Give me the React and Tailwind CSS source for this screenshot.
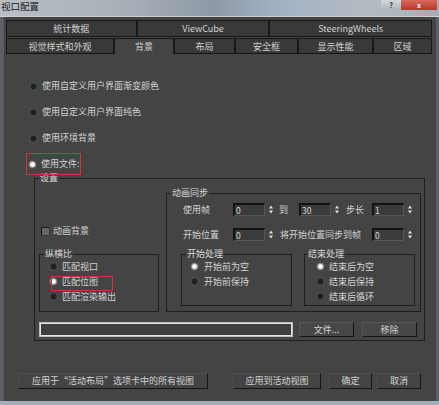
import React from "react";

const Radio = ({ on }) =>
  on ? (
    <svg width="9" height="9" viewBox="0 0 9 9" className="shrink-0">
      <defs>
        <radialGradient id="rs" cx="50%" cy="50%" r="50%">
          <stop offset="0" stopColor="#ffffff" />
          <stop offset="0.45" stopColor="#f2f2f2" />
          <stop offset="0.7" stopColor="#8c8c8c" />
          <stop offset="1" stopColor="#4e4e4e" />
        </radialGradient>
      </defs>
      <circle cx="4.5" cy="4.5" r="4.3" fill="url(#rs)" />
    </svg>
  ) : (
    <svg width="9" height="9" viewBox="0 0 9 9" className="shrink-0">
      <defs>
        <radialGradient id="ru" cx="50%" cy="50%" r="50%">
          <stop offset="0" stopColor="#1a1a1a" />
          <stop offset="0.6" stopColor="#262626" />
          <stop offset="1" stopColor="#5a5a5a" />
        </radialGradient>
      </defs>
      <circle cx="4.5" cy="4.5" r="4.3" fill="url(#ru)" />
    </svg>
  );

const Spin = ({ v }) => (
  <div className="flex items-center w-[41px] shrink-0">
    <div className="w-[32px] h-[13px] bg-[#3b3b3b] border-t-2 border-l-2 border-t-[#121212] border-l-[#121212] border-b border-r border-b-[#565656] border-r-[#565656] text-[8.5px] leading-[10px] pl-[1px] text-[#d4d4d4]">
      {v}
    </div>
    <svg className="ml-[3px]" width="6" height="11" viewBox="0 0 6 11">
      <polygon points="1,4.5 3,1.5 5,4.5" fill="#e2e2e2" />
      <polygon points="1,6.5 3,9.5 5,6.5" fill="#e2e2e2" />
    </svg>
  </div>
);

const Legend = ({ children, ml = "ml-[4px]" }) => (
  <legend className={`${ml} px-[1px] leading-[12px] text-[9px] text-[#d6d6d6]`}>{children}</legend>
);

const Tab = ({ w, children, sel }) => (
  <div
    className={`${w} flex items-center justify-center border border-[#171717] ${
      sel ? "bg-[#444444] border-b-0" : "bg-[#393939]"
    } text-[#d0d0d0] leading-none`}
  >
    {children}
  </div>
);

const Btn = ({ w, children }) => (
  <div
    className={`${w} h-full flex items-center justify-center border border-t-[#4f4f4f] border-l-[#4f4f4f] border-b-[#161616] border-r-[#161616] text-[#d2d2d2]`}
  >
    {children}
  </div>
);

export default function App() {
  return (
    <div className="w-[439px] h-[405px] flex flex-col overflow-hidden bg-[#5b6168] font-['Noto_Sans_CJK_SC','Noto_Sans',sans-serif] text-[9px] text-[#d2d2d2]">
      {/* title bar */}
      <div className="h-[17px] shrink-0 flex justify-between items-start border-b border-[#cdd2d7] bg-[linear-gradient(90deg,#b9bfc5_0%,#a8afb7_28%,#8e99a6_48%,#a2b2c5_64%,#b5bcc3_84%,#a5acb3_100%)]">
        <div className="pl-[1px] leading-[13px] text-[9.5px] text-[#1a1a1a]">视口配置</div>
        <div className="flex mr-[2px]">
          <div className="w-[20px] h-[10px] flex items-center justify-center bg-[linear-gradient(180deg,#d6d9dc,#aeb3b8)] text-[7px] leading-[8px] text-[#222] font-bold">
            ?
          </div>
          <div className="w-[36px] h-[10px] flex items-center justify-center bg-[linear-gradient(180deg,#d9685c,#b8372b)] text-[7px] leading-[8px] text-white font-bold">
            x
          </div>
        </div>
      </div>

      {/* body */}
      <div className="flex-1 mx-[3px] bg-[#444444] flex flex-col pt-[3px] pl-[2px] pr-[4px] border-l border-[#5a5a5a]">
        {/* tabs */}
        <div className="flex h-[17px]">
          <Tab w="w-[131px]">统计数据</Tab>
          <Tab w="w-[133px]">ViewCube</Tab>
          <Tab w="w-[163px]">SteeringWheels</Tab>
        </div>
        <div className="flex h-[16px] mt-[1px]">
          <Tab w="w-[108px]">视觉样式和外观</Tab>
          <Tab w="w-[60px]" sel>
            背景
          </Tab>
          <Tab w="w-[61px]">布局</Tab>
          <Tab w="w-[63px]">安全框</Tab>
          <Tab w="w-[75px]">显示性能</Tab>
          <Tab w="w-[59px]">区域</Tab>
        </div>

        {/* panel */}
        <div className="flex flex-col pt-[19px]">
          <div className="h-[26px] flex items-center pl-[23px] gap-[4px]">
            <Radio />
            <span>使用自定义用户界面渐变颜色</span>
          </div>
          <div className="h-[26px] flex items-center pl-[23px] gap-[4px]">
            <Radio />
            <span>使用自定义用户界面纯色</span>
          </div>
          <div className="h-[26px] flex items-center pl-[23px] gap-[4px]">
            <Radio />
            <span>使用环境背景</span>
          </div>
          <div className="relative h-[21px] pt-[5px] flex items-center pl-[22px] gap-[4px]">
            <Radio on />
            <span>使用文件:</span>
            <div className="absolute left-[20px] top-[2px] w-[55px] h-[22px] border border-[#d3323c]" />
          </div>

          {/* 设置 */}
          <fieldset className="ml-[28px] w-[391px] border border-[#1f1f1f]">
            <Legend>设置</Legend>
            <div className="flex">
              {/* left column */}
              <div className="w-[120px] ml-[4px] flex flex-col justify-end">
                <div className="h-[14px] flex items-center pl-[2px] gap-[3px]">
                  <div className="w-[9px] h-[9px] bg-[#666666] border border-t-[#1a1a1a] border-l-[#1a1a1a] border-b-[#3a3a3a] border-r-[#3a3a3a]" />
                  <span>动画背景</span>
                </div>
                <fieldset className="mt-[10px] border border-[#1f1f1f] pb-[7px]">
                  <Legend>纵横比</Legend>
                  <div className="-mt-[1px] flex flex-col">
                    <div className="h-[15px] flex items-center pl-[9px] gap-[4px]">
                      <Radio />
                      <span>匹配视口</span>
                    </div>
                    <div className="relative h-[15px] flex items-center pl-[9px] gap-[4px]">
                      <Radio on />
                      <span>匹配位图</span>
                      <div className="absolute left-[11px] top-[2px] w-[62px] h-[15px] border border-[#d3323c]" />
                    </div>
                    <div className="h-[15px] flex items-center pl-[9px] gap-[4px]">
                      <Radio />
                      <span>匹配渲染输出</span>
                    </div>
                  </div>
                </fieldset>
              </div>

              {/* 动画同步 */}
              <fieldset className="ml-[7px] mt-[3px] w-[255px] border border-[#1f1f1f] pb-[5px]">
                <Legend>动画同步</Legend>
                <div className="mt-[3px] h-[15px] flex items-center pl-[16px]">
                  <span className="w-[50px] shrink-0">使用帧</span>
                  <Spin v="0" />
                  <span className="ml-[5px] w-[20px] shrink-0">到</span>
                  <Spin v="30" />
                  <span className="ml-[6px] w-[26px] shrink-0">步长</span>
                  <Spin v="1" />
                </div>
                <div className="mt-[10px] h-[15px] flex items-center pl-[16px]">
                  <span className="w-[50px] shrink-0">开始位置</span>
                  <Spin v="0" />
                  <span className="ml-[6px] w-[92px] shrink-0">将开始位置同步到帧</span>
                  <Spin v="0" />
                </div>
                <div className="mt-[6px] flex pl-[14px]">
                  <fieldset className="w-[111px] border border-[#1f1f1f]">
                    <Legend ml="ml-[4px]">开始处理</Legend>
                    <div className="-mt-[1px] flex flex-col">
                      <div className="h-[15px] flex items-center pl-[8px] gap-[5px]">
                        <Radio on />
                        <span>开始前为空</span>
                      </div>
                      <div className="h-[15px] flex items-center pl-[8px] gap-[5px]">
                        <Radio />
                        <span>开始前保持</span>
                      </div>
                    </div>
                  </fieldset>
                  <fieldset className="ml-[12px] w-[111px] border border-[#1f1f1f] pb-[1px]">
                    <Legend ml="ml-[2px]">结束处理</Legend>
                    <div className="-mt-[1px] flex flex-col">
                      <div className="h-[15px] flex items-center pl-[11px] gap-[4px]">
                        <Radio on />
                        <span>结束后为空</span>
                      </div>
                      <div className="h-[15px] flex items-center pl-[11px] gap-[4px]">
                        <Radio />
                        <span>结束后保持</span>
                      </div>
                      <div className="h-[15px] flex items-center pl-[11px] gap-[4px]">
                        <Radio />
                        <span>结束后循环</span>
                      </div>
                    </div>
                  </fieldset>
                </div>
              </fieldset>
            </div>

            {/* path row */}
            <div className="mt-[10px] mb-[3px] h-[15px] flex pl-[4px]">
              <div className="w-[254px] h-full bg-[#3e3e3e] border border-[#bdbdbd] shadow-[inset_0_0_0_1px_#e4e4e4]" />
              <div className="ml-[6px] h-full">
                <div className="w-[55px] h-full flex items-center justify-center bg-[#474747] border border-t-[#575757] border-l-[#575757] border-b-[#151515] border-r-[#151515]">
                  文件...
                </div>
              </div>
              <div className="ml-[8px] h-full">
                <div className="w-[55px] h-full flex items-center justify-center bg-[#474747] border border-t-[#575757] border-l-[#575757] border-b-[#151515] border-r-[#151515]">
                  移除
                </div>
              </div>
            </div>
          </fieldset>
        </div>

        {/* bottom buttons */}
        <div className="mt-[32px] h-[16px] flex pl-[12px]">
          <Btn w="w-[190px]">应用于“活动布局”选项卡中的所有视图</Btn>
          <div className="ml-[25px] h-full">
            <Btn w="w-[88px]">应用到活动视图</Btn>
          </div>
          <div className="ml-[8px] h-full">
            <Btn w="w-[43px]">确定</Btn>
          </div>
          <div className="ml-[5px] h-full">
            <Btn w="w-[44px]">取消</Btn>
          </div>
        </div>
      </div>
      <div className="h-[4px] shrink-0 bg-[#a3adb8]" />
    </div>
  );
}
